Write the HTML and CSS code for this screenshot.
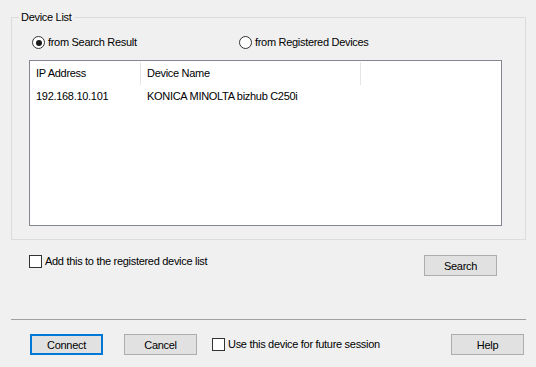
FILE: index.html
```html
<!DOCTYPE html>
<html>
<head>
<meta name="viewport" content="width=device-width, initial-scale=1">
<link rel="stylesheet" href="styles.css">
</head>
<body>

<div class="dialog">
  <fieldset class="group">
    <legend>Device List</legend>

    <div class="group-body">
      <div class="sources">
        <label class="radio"><span class="dot checked"></span>from Search Result</label>
        <label class="radio"><span class="dot"></span>from Registered Devices</label>
      </div>

      <div class="list">
        <div class="list-head">
          <div class="col col-ip">IP Address</div>
          <div class="col col-name">Device Name</div>
        </div>
        <div class="list-row">
          <div class="col col-ip">192.168.10.101</div>
          <div class="col col-name">KONICA MINOLTA bizhub C250i</div>
        </div>
      </div>
    </div>
  </fieldset>

  <div class="options">
    <label class="check"><span class="box"></span>Add this to the registered device list</label>
    <button type="button" class="btn">Search</button>
  </div>

  <hr class="divider">

  <div class="footer">
    <button type="button" class="btn btn-default">Connect</button>
    <button type="button" class="btn">Cancel</button>
    <label class="check check-future"><span class="box"></span>Use this device for future session</label>
    <button type="button" class="btn">Help</button>
  </div>
</div>

</body>
</html>
```

FILE: styles.css
```css
* {
  box-sizing: border-box;
}

body {
  margin: 0;
  background-color: #f0f0f0;
  font-family: "Liberation Sans", Arial, sans-serif;
  font-size: 11px;
  letter-spacing: -0.3px;
  color: #000;
}

.dialog {
  width: 536px;
  height: 367px;
  padding: 11px 10px 0 11px;
}

/* group box */
.group {
  margin: 0;
  min-width: 0;
  padding: 0;
  border: 1px solid #dcdcdc;
}

.group legend {
  margin-left: 7px;
  padding: 0 2px;
  line-height: 13px;
}

.group-body {
  padding: 12px 23px 13px 17px;
}

.sources {
  display: grid;
  grid-template-columns: 207px auto;
  padding-left: 3px;
  height: 13px;
}

.radio, .check {
  display: flex;
  align-items: center;
  line-height: 13px;
  white-space: nowrap;
}

.dot {
  position: relative;
  width: 13px;
  height: 13px;
  margin-right: 3px;
  border: 1px solid #333;
  border-radius: 50%;
  background: #fff;
}

/*the filled mark of the selected radio button*/
.dot.checked:after {
  position: absolute;
  content: "";
  top: 2.5px;
  left: 2.5px;
  width: 6px;
  height: 6px;
  border-radius: 50%;
  background: #1a1a1a;
}

.box {
  width: 13px;
  height: 13px;
  margin-right: 3px;
  border: 1px solid #333;
  background: #fff;
}

/* list view */
.list {
  margin-top: 11px;
  height: 166px;
  border: 1px solid #828790;
  background: #fff;
}

.list-head, .list-row {
  display: flex;
}

.list-head {
  height: 25px;
  align-items: center;
}

.list-head .col {
  height: 23px;
  line-height: 23px;
  border-right: 1px solid #e5e5e5;
}

.list-row .col {
  height: 17px;
  line-height: 17px;
  margin-top: 2px;
}

.col {
  padding-left: 6px;
  white-space: nowrap;
}

.col-ip {
  width: 111px;
}

.col-name {
  width: 220px;
}

/* below the group */
.options {
  display: flex;
  justify-content: space-between;
  align-items: flex-start;
  margin-top: 15px;
  padding: 0 29px 0 18px;
}

.btn {
  width: 73px;
  height: 21px;
  padding: 0;
  border: 1px solid #adadad;
  background: #e1e1e1;
  font-family: inherit;
  font-size: 11px;
  letter-spacing: -0.3px;
  color: #000;
}

.btn-default {
  border: 2px solid #0078d7;
}

.divider {
  margin: 43px 0 0 0;
  height: 1px;
  border: none;
  background: #a0a0a0;
}

.footer {
  display: flex;
  align-items: center;
  gap: 21px;
  margin-top: 14px;
  padding: 0 2px 0 19px;
}

.check-future {
  margin-left: -6px;
  flex: 1;
}
```
